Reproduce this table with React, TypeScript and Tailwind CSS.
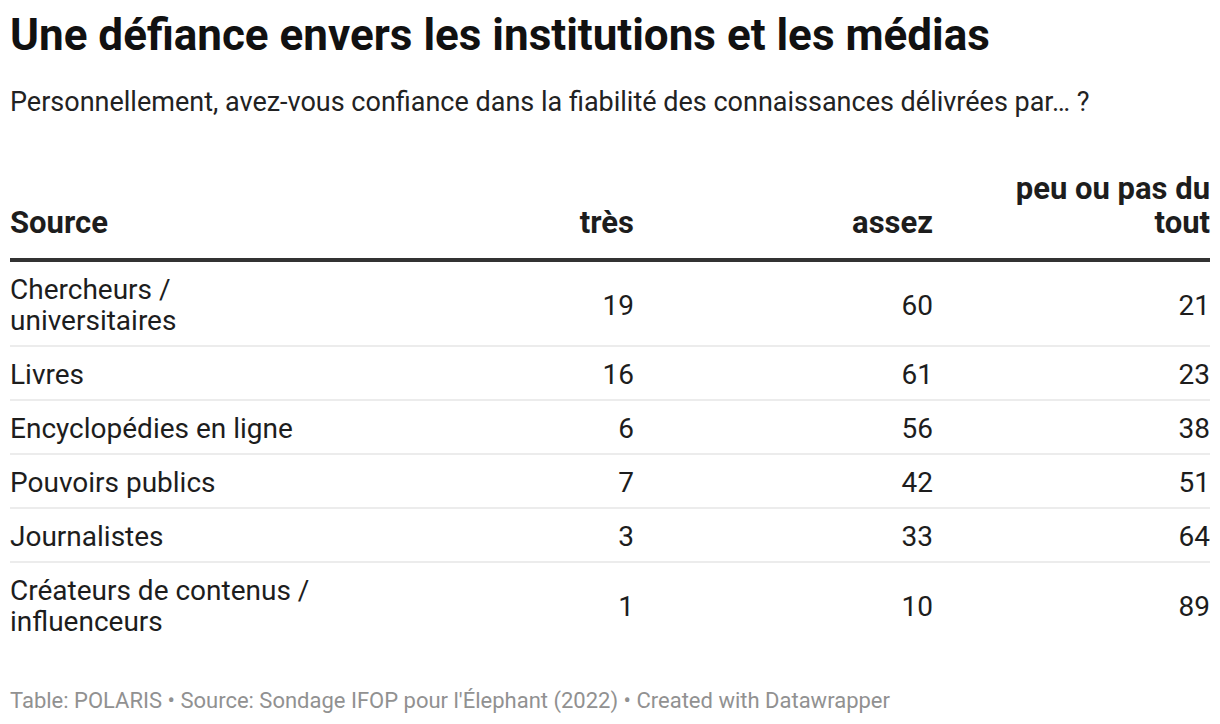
const rows: { label: React.ReactNode; tres: number; assez: number; peu: number }[] = [
  { label: <>Chercheurs /<br />universitaires</>, tres: 19, assez: 60, peu: 21 },
  { label: "Livres", tres: 16, assez: 61, peu: 23 },
  { label: "Encyclopédies en ligne", tres: 6, assez: 56, peu: 38 },
  { label: "Pouvoirs publics", tres: 7, assez: 42, peu: 51 },
  { label: "Journalistes", tres: 3, assez: 33, peu: 64 },
  { label: <>Créateurs de contenus /<br />influenceurs</>, tres: 1, assez: 10, peu: 89 },
]

const cols = "grid grid-cols-[324px_300px_299px_277px]"

export default function App() {
  return (
    <div className="min-h-[724px] bg-white px-[10px] pt-[9px] text-[#1d1d1d] font-['Roboto','Liberation_Sans',sans-serif]">
      <h1 className="text-[44px] leading-[52px] font-bold text-[#111]">Une défiance envers les institutions et les médias</h1>
      <p className="mt-[25px] text-[27px] leading-[32px] text-[#222]">
        Personnellement, avez-vous confiance dans la fiabilité des connaissances délivrées par… ?
      </p>

      {/* tableau */}
      <div className="mt-[54px]">
        <div className={`${cols} items-end border-b-4 border-[#333] pb-[18px] text-[31px] leading-[34px] font-bold`}>
          <div>Source</div>
          <div className="text-right">très</div>
          <div className="text-right">assez</div>
          <div className="text-right">peu ou pas du<br />tout</div>
        </div>
        {rows.map((r, i) => (
          <div
            key={i}
            className={`${cols} items-center pt-[12px] pb-[9px] text-[28px] leading-[31px] ${i < rows.length - 1 ? "border-b-2 border-[#ececec]" : ""}`}
          >
            <div>{r.label}</div>
            <div className="text-right">{r.tres}</div>
            <div className="text-right">{r.assez}</div>
            <div className="text-right">{r.peu}</div>
          </div>
        ))}
      </div>

      <div className="mt-[42px] text-[22px] leading-[26px] text-[#919191]">
        Table: POLARIS • Source: Sondage IFOP pour l'Élephant (2022) • Created with Datawrapper
      </div>
    </div>
  )
}
